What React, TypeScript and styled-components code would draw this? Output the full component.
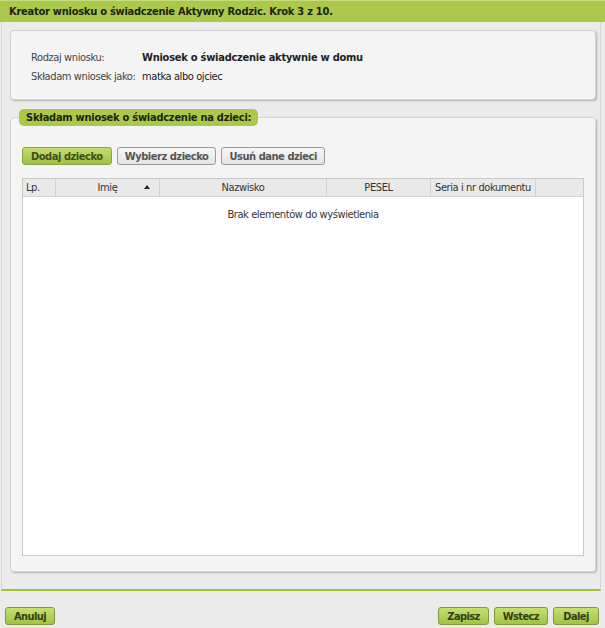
import React from "react"
import styled, { createGlobalStyle } from "styled-components"

const GlobalStyle = createGlobalStyle`
    html, body {
        margin: 0;
        padding: 0;
        background-color: #ebebeb;
    }
    body {
        font-family: Tahoma, "DejaVu Sans Condensed", "DejaVu Sans", sans-serif;
        font-size: 11px;
        letter-spacing: -0.4px;
        color: #333;
    }
`

const Page = styled.div`
    display: flex;
    flex-direction: column;
    width: 605px;
    height: 628px;
    background-color: #ebebeb;
`

const Header = styled.div`
    height: 22px;
    display: flex;
    align-items: center;
    padding-left: 9px;
    background-color: #abc84a;
    border-top: 1px solid #c6dc7e;
    box-sizing: border-box;
    font-weight: bold;
    letter-spacing: -0.25px;
    color: #1c2410;
`

const Main = styled.div`
    flex: 1;
    display: flex;
    flex-direction: column;
    padding: 8px 4px 0 8px;
    border-left: 1px solid #d6d6d6;
    border-right: 1px solid #d6d6d6;
    border-bottom: 2px solid #9dc33a;
    margin: 0 4px 0 1px;
    box-sizing: border-box;
    background-color: #ebebeb;
`

const InfoPanel = styled.div`
    height: 70px;
    box-sizing: border-box;
    display: grid;
    grid-template-columns: 111px auto;
    align-content: start;
    row-gap: 6px;
    line-height: 13px;
    padding: 20px 0 0 20px;
    background-color: #f4f4f4;
    border: 1px solid #d4d4d4;
    border-radius: 4px;
    box-shadow: 1px 1px 2px rgba(0, 0, 0, 0.25);
`

const Label = styled.span`
    white-space: nowrap;
    color: #444;
`

const Value = styled.span<{ $bold?: boolean }>`
    white-space: nowrap;
    color: #222;
    font-weight: ${p => (p.$bold ? "bold" : "normal")};
    letter-spacing: ${p => (p.$bold ? "-0.25px" : "-0.4px")};
`

const ChildrenSet = styled.fieldset`
    margin: 9px 0 17px 0;
    padding: 0 11px 15px 11px;
    flex: 1;
    min-width: 0;
    display: flex;
    flex-direction: column;
    background-color: #f4f4f4;
    border: 1px solid #d4d4d4;
    border-radius: 4px;
    box-shadow: 1px 1px 2px rgba(0, 0, 0, 0.25);
`

const Legend = styled.legend`
    margin-left: -3px;
    padding: 0 7px;
    height: 17px;
    line-height: 17px;
    background-color: #abc84a;
    border-radius: 5px;
    font-weight: bold;
    letter-spacing: -0.25px;
    color: #1c2410;
`

const Toolbar = styled.div`
    display: flex;
    gap: 5px;
    margin-top: 21px;
`

const ToolButton = styled.button<{ $primary?: boolean }>`
    height: 18px;
    padding: 0 ${p => (p.$primary ? "8px" : "7px")};
    box-sizing: border-box;
    font-family: inherit;
    font-size: 11px;
    font-weight: bold;
    letter-spacing: -0.45px;
    color: ${p => (p.$primary ? "#3f4f1a" : "#555")};
    background: ${p =>
        p.$primary
            ? "linear-gradient(#c3dc6e, #9fc244)"
            : "linear-gradient(#f6f6f6, #e4e4e4)"};
    border: 1px solid ${p => (p.$primary ? "#8aa344" : "#9a9a9a")};
    border-radius: 3px;
    cursor: pointer;
`

const Grid = styled.div`
    margin-top: 13px;
    flex: 1;
    display: flex;
    flex-direction: column;
    background-color: #fff;
    border: 1px solid #c9c9c9;
`

const HeadRow = styled.div`
    display: flex;
    height: 17px;
    background-color: #e9e9e9;
    border-bottom: 1px solid #d4d4d4;
`

const HeadCell = styled.div<{ $w: number; $left?: boolean }>`
    position: relative;
    width: ${p => p.$w}px;
    flex: ${p => (p.$w ? "none" : "1")};
    display: flex;
    align-items: center;
    justify-content: ${p => (p.$left ? "flex-start" : "center")};
    padding-left: ${p => (p.$left ? "3px" : "0")};
    box-sizing: border-box;
    border-right: 1px solid #d0d0d0;
    white-space: nowrap;
    color: #333;
    &:last-child {
        border-right: none;
    }
`

const SortMark = styled.span`
    position: absolute;
    right: 9px;
    top: 6px;
    width: 0;
    height: 0;
    border-left: 3px solid transparent;
    border-right: 3px solid transparent;
    border-bottom: 4px solid #222;
`

const Empty = styled.div`
    text-align: center;
    padding-top: 11px;
    color: #333;
`

const Footer = styled.div`
    height: 37px;
    display: flex;
    align-items: flex-end;
    justify-content: space-between;
    padding: 0 6px 3px 5px;
    box-sizing: border-box;
`

const FooterGroup = styled.div`
    display: flex;
    gap: 5px;
`

const NavButton = styled.button`
    height: 18px;
    min-width: 46px;
    padding: 0 8px;
    box-sizing: border-box;
    font-family: "Liberation Sans Narrow", "DejaVu Sans Condensed", sans-serif;
    font-size: 11px;
    font-weight: bold;
    letter-spacing: -0.6px;
    color: #323f16;
    background: linear-gradient(#c6df72, #a0c443);
    border: 1px solid #7f9a3a;
    border-radius: 3px;
    cursor: pointer;
`

const columns = [
    { title: "Lp.", w: 33, left: true },
    { title: "Imię", w: 104, sort: true },
    { title: "Nazwisko", w: 167 },
    { title: "PESEL", w: 104 },
    { title: "Seria i nr dokumentu", w: 105 },
    { title: "", w: 0 },
]

const App: React.FC = () => {
    return (
        <Page>
            <GlobalStyle />
            <Header>Kreator wniosku o świadczenie Aktywny Rodzic. Krok 3 z 10.</Header>
            <Main>
                <InfoPanel>
                    <Label>Rodzaj wniosku:</Label>
                    <Value $bold>Wniosek o świadczenie aktywnie w domu</Value>
                    <Label>Składam wniosek jako:</Label>
                    <Value>matka albo ojciec</Value>
                </InfoPanel>
                <ChildrenSet>
                    <Legend>Składam wniosek o świadczenie na dzieci:</Legend>
                    <Toolbar>
                        <ToolButton $primary>Dodaj dziecko</ToolButton>
                        <ToolButton>Wybierz dziecko</ToolButton>
                        <ToolButton>Usuń dane dzieci</ToolButton>
                    </Toolbar>
                    <Grid>
                        <HeadRow>
                            {columns.map((c, i) => (
                                <HeadCell key={i} $w={c.w} $left={c.left}>
                                    {c.title}
                                    {c.sort ? <SortMark /> : null}
                                </HeadCell>
                            ))}
                        </HeadRow>
                        <Empty>Brak elementów do wyświetlenia</Empty>
                    </Grid>
                </ChildrenSet>
            </Main>
            <Footer>
                <FooterGroup>
                    <NavButton>Anuluj</NavButton>
                </FooterGroup>
                <FooterGroup>
                    <NavButton>Zapisz</NavButton>
                    <NavButton>Wstecz</NavButton>
                    <NavButton>Dalej</NavButton>
                </FooterGroup>
            </Footer>
        </Page>
    )
}

export default App
